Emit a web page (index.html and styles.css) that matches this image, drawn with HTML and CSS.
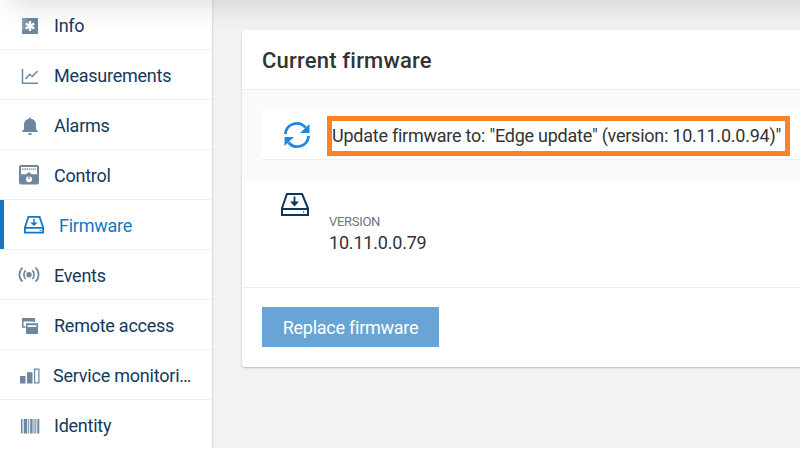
FILE: index.html
```
<!DOCTYPE html>
<html lang="en">
<head>
<meta charset="utf-8">
<title>Firmware</title>
<link rel="stylesheet" href="styles.css">
</head>
<body>
<div class="app">
  <nav class="sidebar">
    <a class="item"><svg class="icon" viewBox="0 0 22 22"><path fill="currentColor" d="M4 3h16v16H4z"/><path stroke="#fff" stroke-width="2.300" d="M12 6v10M7.700 8.500l8.600 5M16.300 8.500l-8.600 5"/></svg><span class="label">Info</span></a>
    <a class="item"><svg class="icon" viewBox="0 0 22 22"><path fill="none" stroke="currentColor" stroke-width="1.500" d="M4.500 4v14.200H20"/><path fill="none" stroke="currentColor" stroke-width="1.500" d="M7.500 14l4.200-4.800 2.600 2.300L19.500 6"/></svg><span class="label">Measurements</span></a>
    <a class="item"><svg class="icon" viewBox="0 0 22 22"><path fill="currentColor" d="M12 2l1.200 1.700c3 .7 4.800 3 4.800 5.800v4.700l1.800 1.800v1H4.200v-1L6 14.200V9.500c0-2.800 1.800-5.100 4.800-5.800zM10 18.200h4c0 1-.8 1.800-2 1.800s-2-.8-2-1.800z"/></svg><span class="label">Alarms</span></a>
    <a class="item"><svg class="icon" viewBox="0 0 22 22"><rect x="1" y="0" width="20" height="19.500" rx="2" fill="currentColor"/><path fill="#fff" d="M3 2h16v7.300h-5.200a3.500 3.500 0 0 0-5.600 0H3z"/><path stroke="#b5a58f" stroke-width="1.800" stroke-dasharray="1.600 .6" d="M4 4.200h14"/><circle cx="11" cy="14.300" r="3" fill="#fff"/><path stroke="currentColor" stroke-width="1.200" d="M11 7v2M11 11v3"/></svg><span class="label">Control</span></a>
    <a class="item active"><svg class="icon" viewBox="0 0 22 22"><path fill="none" stroke="currentColor" stroke-width="1.800" d="M1.900 12.500L5.400 1.900h11.200l3.500 10.600v5.200H1.900zM1.900 12.900h18.200"/><path fill="none" stroke="currentColor" stroke-width="1.500" d="M11 4v5"/><path fill="currentColor" d="M7.300 7.500h7.400L11 11z"/><path fill="currentColor" d="M16.500 15h2v1h-2z"/></svg><span class="label">Firmware</span></a>
    <a class="item"><svg class="icon" viewBox="0 0 22 22"><circle cx="11" cy="9.700" r="2.700" fill="currentColor"/><path fill="none" stroke="currentColor" stroke-width="1.700" d="M7.700 5.400a6 6 0 0 0 0 8.600M14.300 5.400a6 6 0 0 1 0 8.600M4.500 2.700a9.500 9.500 0 0 0 0 14M17.500 2.700a9.500 9.500 0 0 1 0 14"/></svg><span class="label">Events</span></a>
    <a class="item"><svg class="icon" viewBox="0 0 22 22"><path fill="currentColor" d="M4 3h13v4h-1.500V6.500H5.500v4.800H7.500v1.500H4z"/><path fill="currentColor" d="M8 8.200h12V19H8zM9.500 10.200v1.800h9v-1.800z" fill-rule="evenodd"/></svg><span class="label">Remote access</span></a>
    <a class="item monitor"><svg class="icon" viewBox="0 0 22 22"><path fill="currentColor" d="M2 11h5.500v7.500H2zM9 7.200h5.500v11.300H9z"/><path fill="none" stroke="currentColor" stroke-width="1.200" d="M16.600 4.100h4.300v13.800h-4.300z"/></svg><span class="label">Service monitori…</span></a>
    <a class="item"><svg class="icon" viewBox="0 0 22 22"><path fill="currentColor" d="M3 4h1.500v14.500H3zM5.700 4h3.500v14.500H5.700zM10.200 4h1v14.500h-1zM12.200 4h2.400v14.500h-2.400zM15.500 4h1v14.500h-1zM17.300 4h1v14.500h-1zM19.300 4h2v14.500h-2z"/></svg><span class="label">Identity</span></a>
  </nav>
  <main class="content">
    <section class="card">
      <h1 class="title">Current firmware</h1>
      <div class="pending">
        <div class="update">
          <svg class="sync" viewBox="0 0 28 28"><g fill="none" stroke="currentColor" stroke-width="2.800"><path d="M2.400 13A11.400 11.400 0 0 1 22.500 6.500"/><path d="M25.600 15A11.400 11.400 0 0 1 5.500 21.500"/></g><path fill="currentColor" d="M26.500 3v9H17zM1.500 25v-9H11z"/></svg>
          <div class="highlight">Update firmware to: "Edge update" (version: 10.11.0.0.94)"</div>
        </div>
      </div>
      <div class="current">
        <svg class="drive" viewBox="0 0 30 24"><path fill="none" stroke="currentColor" stroke-width="2" d="M2 16.300L6.900 2h15.200L28 16.300V23H2zM2 17h26"/><path stroke="currentColor" stroke-width="1.800" d="M14.500 4.500v7"/><path fill="currentColor" d="M10 9.500h9l-4.500 5zM23 19.500h1.200v1.200H23z"/></svg>
        <dl class="version"><dt>VERSION</dt><dd>10.11.0.0.79</dd></dl>
      </div>
      <div class="footer"><button class="replace">Replace firmware</button></div>
    </section>
  </main>
  <div class="shade"></div>
</div>
</body>
</html>
```
FILE: styles.css
```
* { box-sizing: border-box; }
body { margin: 0; background: #fff; font-family: Roboto, "Liberation Sans", sans-serif; color: #333; overflow: hidden; }
.app { position: relative; display: flex; width: 800px; height: 448px; background: #f0f2f4; overflow: hidden; }
.sidebar { flex: none; width: 213px; background: #fff; border-right: 1px solid #dcdfe1; box-shadow: 1px 0 1px #e9ebed; }
.item { display: flex; align-items: center; height: 50px; padding: 2px 18px 0; border-bottom: 1px solid #eeeff0; font-size: 18px; color: #14395c; }
.icon { flex: none; width: 22px; height: 22px; margin-right: 14px; color: #6d879f; }
.label { white-space: nowrap; letter-spacing: -.25px; }
.monitor .label { margin-left: -1px; letter-spacing: -.22px; }
.active { border-bottom-color: #eeeff0; box-shadow: inset 4px 0 #1776bf; padding-left: 23px; color: #1776bf; }
.active .icon { color: inherit; }
.content { flex: none; width: 620px; padding: 30px 0 0 29px; }
.card { height: 337px; background: #fff; border-radius: 3px; box-shadow: 0 1px 2px rgba(0,0,0,.22); overflow: hidden; }
.title { margin: 0; height: 60px; padding-left: 20px; border-bottom: 1px solid #eeeff0; font-size: 22px; line-height: 61px; font-weight: 500; letter-spacing: .2px; color: #333; }
.pending { height: 90px; padding: 20px; background: #fafafb; }
.update { display: flex; align-items: center; height: 50px; background: #fff; border-bottom: 1px solid #eeeff0; }
.sync { flex: none; width: 28px; height: 28px; margin: 1px 16px 0 21px; color: #1e88e5; }
.highlight { width: 463px; height: 40px; margin-top: 3px; border: 5px solid #ff8126; font-size: 18px; line-height: 30px; letter-spacing: -.24px; white-space: nowrap; }
.current { display: flex; height: 108px; padding: 12px 0 0 38px; border-bottom: 1px solid #eeeff0; }
.drive { width: 30px; height: 24px; color: #0b385f; }
.version { margin: 22px 0 0 19px; }
.version dt { font-size: 13px; line-height: 16px; letter-spacing: -.3px; color: #6b7680; }
.version dd { margin: 2px 0 0; font-size: 18px; line-height: 22px; letter-spacing: -.2px; }
.footer { padding: 19px 20px; }
.replace { width: 177px; height: 40px; padding: 0; border: 0; background: #68a5d6; color: #fff; font: 400 18px/41px Roboto, sans-serif; letter-spacing: -.25px; }
.shade { position: absolute; inset: 0 0 auto; height: 30px; background: linear-gradient(90deg, rgba(255,255,255,.8), transparent 30px), linear-gradient(rgba(0,0,0,.085), rgba(0,0,0,.03) 50%, transparent); }
```
